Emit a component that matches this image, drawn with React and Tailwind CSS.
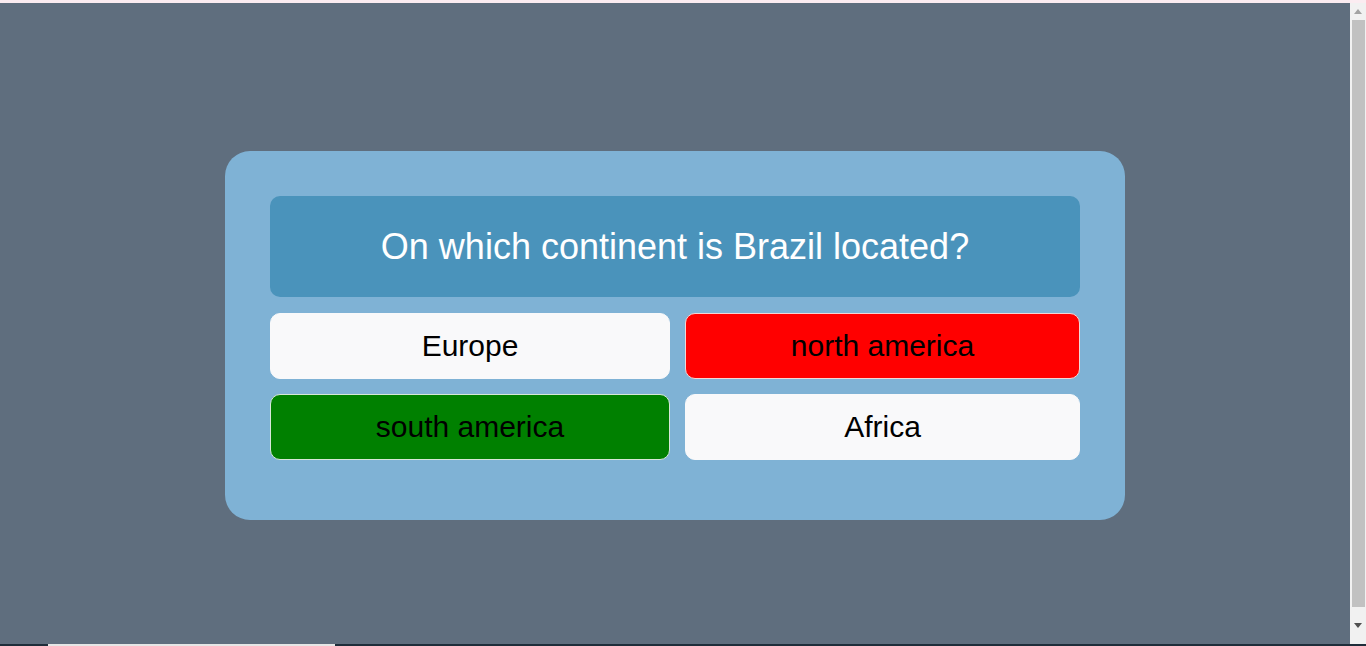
import { useState } from 'react';

const answers = [
    { label: 'Europe', state: 'idle' },
    { label: 'north america', state: 'wrong' },
    { label: 'south america', state: 'right' },
    { label: 'Africa', state: 'idle' },
];

export default function App() {
    const [picked] = useState('north america');

    return (
        <div className="h-[646px] flex flex-col overflow-hidden font-['Liberation_Sans',Arial,sans-serif]">
            <div className="h-[3px] bg-[#fbecf1]" />
            <div className="flex-1 flex min-h-0">
                <main className="flex-1 bg-[#5f6e7e] flex justify-center items-start pt-[148px]">
                    {/* Quiz card */}
                    <div className="w-[900px] bg-[#7fb2d5] rounded-[25px] pt-[45px] px-[45px] pb-[60px]">
                        <div className="h-[101px] bg-[#4a93bb] rounded-[10px] flex items-center justify-center">
                            <h1 className="text-[36px] text-white leading-none">On which continent is Brazil located?</h1>
                        </div>
                        <div className="mt-[16px] grid grid-cols-[400px_395px] gap-[15px]">
                            {answers.map(a => (
                                <button
                                    key={a.label}
                                    className={`h-[66px] pb-[2px] rounded-[10px] text-[30px] text-black flex items-center justify-center border
                                        ${a.state === 'wrong' ? 'bg-[#ff0000] border-[#f3d6d6]' :
                                          a.state === 'right' ? 'bg-[#008000] border-[#d7e8d7]' :
                                          'bg-[#f9f9fa] border-[#f9f9fa]'}`}>
                                    {a.label}
                                </button>
                            ))}
                        </div>
                    </div>
                </main>
                {/* Browser scrollbar */}
                <div className="w-[16px] bg-[#f1f1f1] flex flex-col items-center">
                    <div className="h-[17px] flex items-center justify-center text-[#a3a3a3]">
                        <svg width="8" height="5" viewBox="0 0 8 5"><path d="M0 5 L4 0 L8 5 Z" fill="currentColor" /></svg>
                    </div>
                    <div className="flex-1 w-[13px] ml-[1px] bg-[#c1c1c1]" />
                    <div className="h-[37px] flex items-center justify-center text-[#505050]">
                        <svg width="8" height="5" viewBox="0 0 8 5"><path d="M0 0 L8 0 L4 5 Z" fill="currentColor" /></svg>
                    </div>
                </div>
            </div>
            <div className="h-[2px] bg-[#1e2d3a] flex">
                <div className="ml-[48px] w-[287px] bg-[#e6e6e6]" />
            </div>
        </div>
    );
}
